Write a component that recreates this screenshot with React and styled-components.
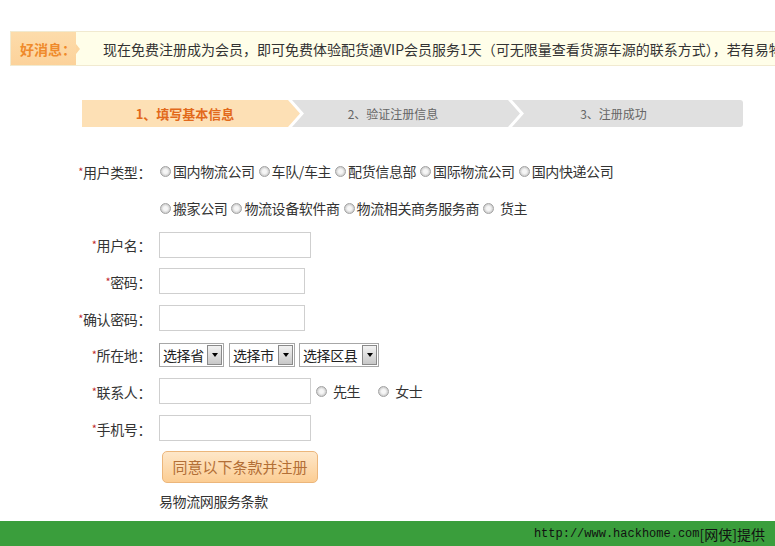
import React from "react";
import styled, { createGlobalStyle } from "styled-components";

const Global = createGlobalStyle`
  html, body { margin: 0; padding: 0; background: #fff; overflow: hidden; }
  body { font-family: "Noto Sans CJK SC", "Noto Sans", sans-serif; color: #333; }
`;

const Page = styled.div`
  width: 775px;
  height: 546px;
  display: flex;
  flex-direction: column;
  overflow: hidden;
`;

const Notice = styled.div`
  margin: 31px 0 0 10px;
  width: 820px;
  height: 35px;
  box-sizing: border-box;
  border: 1px solid #f1ead0;
  background: #fffee9;
  display: flex;
  align-items: center;
  white-space: nowrap;
  font-size: 14px;
`;

const NoticeTag = styled.div`
  position: relative;
  height: 100%;
  width: 65px;
  flex: none;
  background: linear-gradient(#fddcab, #fcd29a);
  color: #ef8a2b;
  font-weight: bold;
  display: flex;
  align-items: center;
  padding-left: 9px;
  box-sizing: border-box;
  &::after {
    content: "";
    position: absolute;
    right: -4px;
    top: 50%;
    margin-top: -5px;
    border-left: 4px solid #fcd59f;
    border-top: 5px solid transparent;
    border-bottom: 5px solid transparent;
  }
`;

const NoticeText = styled.div`
  margin-left: 27px;
  color: #333;
  line-height: 20px;
`;

const Steps = styled.div`
  margin: 34px 0 0 82px;
  width: 661px;
  height: 27px;
  display: flex;
`;

const Step = styled.div`
  height: 100%;
  width: ${(p) => p.$w}px;
  flex: none;
  margin-left: ${(p) => (p.$first ? 0 : -8)}px;
  background: ${(p) => (p.$active ? "#fde0b5" : "#e0e0e0")};
  color: ${(p) => (p.$active ? "#e2691b" : "#666")};
  font-weight: ${(p) => (p.$active ? "bold" : "normal")};
  font-size: ${(p) => (p.$active ? 13 : 12)}px;
  display: flex;
  align-items: center;
  justify-content: center;
  padding-right: ${(p) => p.$shift}px;
  box-sizing: border-box;
  border-radius: ${(p) => (p.$last ? "0 3px 3px 0" : "0")};
  clip-path: ${(p) =>
    p.$first
      ? "polygon(0 0, calc(100% - 12px) 0, 100% 50%, calc(100% - 12px) 100%, 0 100%)"
      : p.$last
      ? "polygon(0 0, 100% 0, 100% 100%, 0 100%, 12px 50%)"
      : "polygon(0 0, calc(100% - 12px) 0, 100% 50%, calc(100% - 12px) 100%, 0 100%, 12px 50%)"};
`;

const Form = styled.div`
  margin-top: 26px;
  padding-left: 72px;
  display: grid;
  grid-template-columns: 80px auto;
  column-gap: 7px;
  grid-auto-rows: 36.7px;
  align-items: center;
  font-size: 14px;
  letter-spacing: -0.4px;
`;

const Label = styled.div`
  text-align: right;
  white-space: nowrap;
  color: #333;
  line-height: 18px;
  padding-right: 1px;
`;

const Star = styled.span`
  color: #c0282d;
  font-size: 11px;
  vertical-align: 2px;
`;

const Field = styled.div`
  display: flex;
  align-items: center;
  white-space: nowrap;
`;

const Option = styled.label`
  display: inline-flex;
  align-items: center;
  margin-right: 3px;
  line-height: 18px;
  color: #333;
`;

const Radio = styled.span`
  width: 9px;
  height: 9px;
  border-radius: 50%;
  border: 1px solid #a3a3a3;
  background: radial-gradient(circle at 50% 50%, #f6f6f6 0 30%, #cfcfcf 70%);
  margin: 0 ${(p) => p.$gap ?? 2}px 0 1px;
  flex: none;
`;

const Input = styled.input`
  width: ${(p) => p.$w}px;
  height: 26px;
  box-sizing: border-box;
  border: 1px solid #cfcfcf;
  background: #fff;
  margin: 0;
  padding: 0 4px;
  outline: none;
`;

const Select = styled.div`
  width: ${(p) => p.$w}px;
  height: 24px;
  box-sizing: border-box;
  border: 1px solid #a7a7a7;
  display: flex;
  align-items: stretch;
  margin-right: ${(p) => p.$mr ?? 4}px;
  background: #fff;
`;

const SelectText = styled.div`
  flex: 1;
  display: flex;
  align-items: center;
  padding-left: 3px;
  font-size: 14px;
  color: #222;
`;

const SelectBtn = styled.div`
  width: 15px;
  margin: 1px;
  box-sizing: border-box;
  border: 1px solid #8a8a8a;
  background: linear-gradient(#f2f2f2, #c8c8c8);
  display: flex;
  align-items: center;
  justify-content: center;
  &::after {
    content: "";
    border-top: 4px solid #000;
    border-left: 3.5px solid transparent;
    border-right: 3.5px solid transparent;
  }
`;

const Gender = styled(Option)`
  margin-left: ${(p) => p.$ml}px;
  margin-right: 0;
`;

const Bottom = styled.div`
  padding-left: 159px;
  display: flex;
  flex-direction: column;
  align-items: flex-start;
`;

const Button = styled.button`
  margin: 4px 0 0 3px;
  width: 156px;
  height: 32px;
  border: 1px solid #ecb67b;
  border-radius: 5px;
  background: linear-gradient(#fee7c9, #fccd93);
  color: #b36f36;
  font-family: "Noto Sans CJK SC", sans-serif;
  font-size: 15px;
  padding: 0;
  cursor: pointer;
`;

const Terms = styled.div`
  margin-top: 8px;
  font-size: 14px;
  line-height: 20px;
  color: #333;
  letter-spacing: -0.4px;
`;

const Footer = styled.div`
  margin-top: auto;
  height: 25px;
  background: #3a9e3c;
  display: flex;
  align-items: center;
  justify-content: flex-end;
  padding-right: 10px;
  color: #111;
  font-family: "Liberation Mono", "Noto Sans CJK SC", monospace;
  font-size: 12px;
`;

const FooterCjk = styled.span`
  font-family: "Noto Sans CJK SC", sans-serif;
  font-size: 14px;
`;

const opts1 = ["国内物流公司", "车队/车主", "配货信息部", "国际物流公司", "国内快递公司"];
const opts2 = ["搬家公司", "物流设备软件商", "物流相关商务服务商"];

const Req = ({ children }) => (
  <Label>
    <Star>*</Star>
    {children}：
  </Label>
);

export default function App() {
  return (
    <Page>
      <Global />
      <Notice>
        <NoticeTag>好消息：</NoticeTag>
        <NoticeText>
          现在免费注册成为会员，即可免费体验配货通VIP会员服务1天（可无限量查看货源车源的联系方式），若有易物流网会员账号请直接登录
        </NoticeText>
      </Notice>

      <Steps>
        <Step $first $active $w={218} $shift={12}>1、填写基本信息</Step>
        <Step $w={228} $shift={26}>2、验证注册信息</Step>
        <Step $last $w={231} $shift={28}>3、注册成功</Step>
      </Steps>

      <Form>
        <Req>用户类型</Req>
        <Field>
          {opts1.map((o) => (
            <Option key={o}>
              <Radio />
              {o}
            </Option>
          ))}
        </Field>
        <Label />
        <Field>
          {opts2.map((o) => (
            <Option key={o}>
              <Radio />
              {o}
            </Option>
          ))}
          <Option>
            <Radio $gap={6} />
            货主
          </Option>
        </Field>

        <Req>用户名</Req>
        <Field>
          <Input $w={152} />
        </Field>

        <Req>密码</Req>
        <Field>
          <Input $w={146} type="password" />
        </Field>

        <Req>确认密码</Req>
        <Field>
          <Input $w={146} type="password" />
        </Field>

        <Req>所在地</Req>
        <Field>
          <Select $w={65} $mr={5}>
            <SelectText>选择省</SelectText>
            <SelectBtn />
          </Select>
          <Select $w={66} $mr={4}>
            <SelectText>选择市</SelectText>
            <SelectBtn />
          </Select>
          <Select $w={80}>
            <SelectText>选择区县</SelectText>
            <SelectBtn />
          </Select>
        </Field>

        <Req>联系人</Req>
        <Field>
          <Input $w={152} />
          <Gender $ml={4}>
            <Radio $gap={6} />
            先生
          </Gender>
          <Gender $ml={17}>
            <Radio $gap={6} />
            女士
          </Gender>
        </Field>

        <Req>手机号</Req>
        <Field>
          <Input $w={152} />
        </Field>
      </Form>

      <Bottom>
        <Button>同意以下条款并注册</Button>
        <Terms>易物流网服务条款</Terms>
      </Bottom>

      <Footer>
        http://www.hackhome.com<FooterCjk>[网侠]提供</FooterCjk>
      </Footer>
    </Page>
  );
}
